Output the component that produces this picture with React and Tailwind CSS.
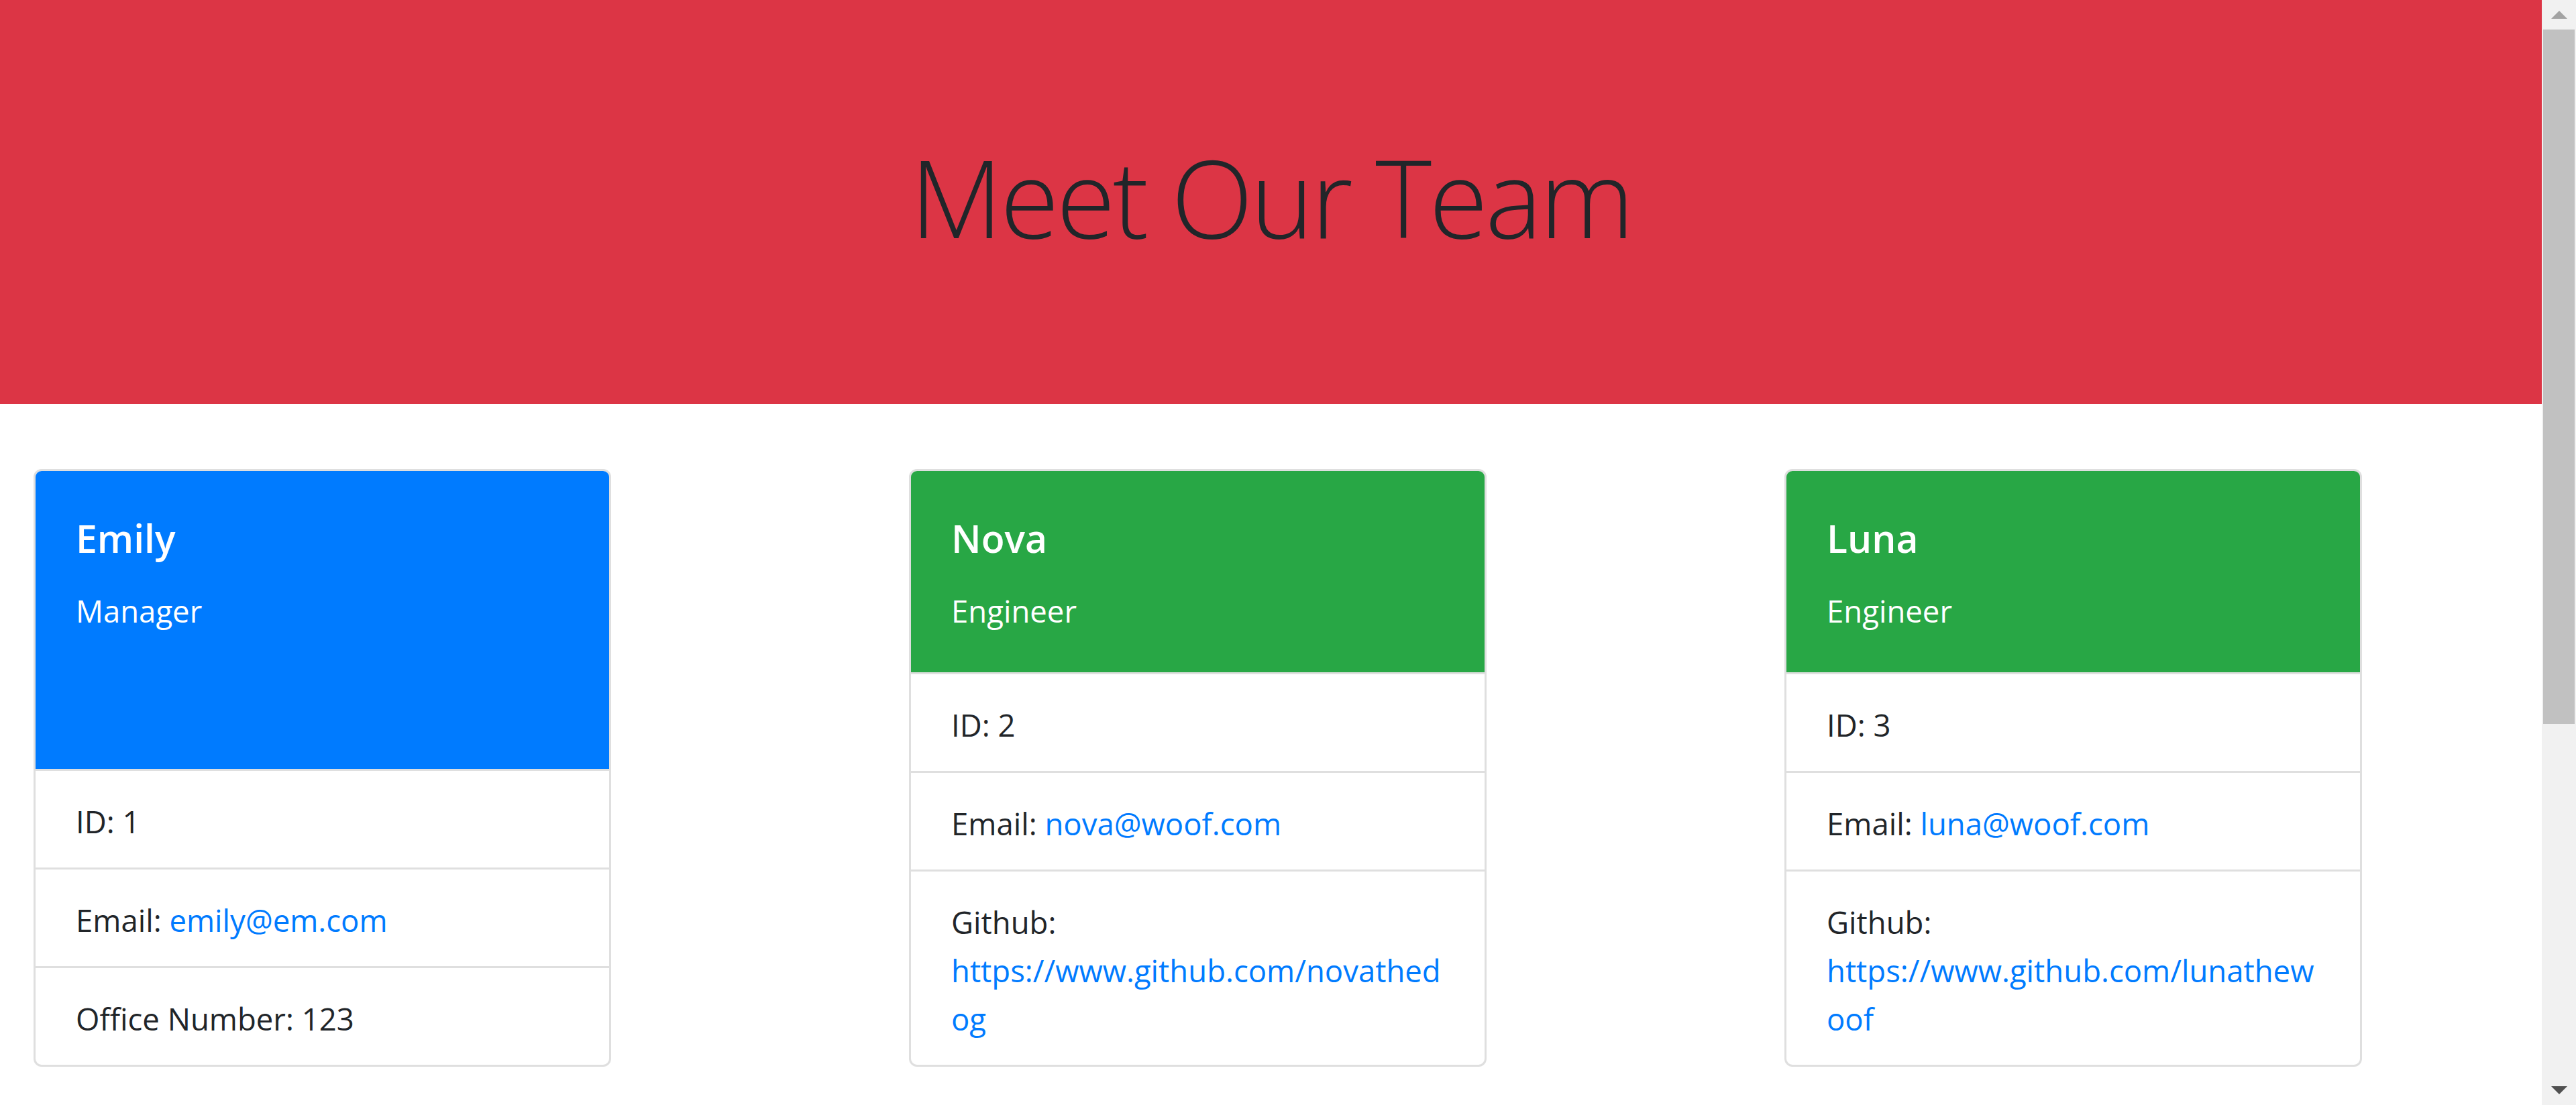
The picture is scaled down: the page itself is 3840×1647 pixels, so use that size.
import React from 'react';

const team = [
  {
    name: 'Emily',
    role: 'Manager',
    id: 1,
    email: 'emily@em.com',
    extra: { label: 'Office Number', value: '123' },
    color: 'bg-[#007bff]'
  },
  {
    name: 'Nova',
    role: 'Engineer',
    id: 2,
    email: 'nova@woof.com',
    github: 'https://www.github.com/novathedog',
    color: 'bg-[#28a745]'
  },
  {
    name: 'Luna',
    role: 'Engineer',
    id: 3,
    email: 'luna@woof.com',
    github: 'https://www.github.com/lunathewoof',
    color: 'bg-[#28a745]'
  }
];

// Tarjeta de cada miembro
const MemberCard = ({ member }) => {
  return (
    <div className="w-[861px] flex flex-col border-[3px] border-[#dfdfdf] rounded-[12px] bg-white">
      <div className={`flex-1 ${member.color} text-white px-[60px] pt-[64px] pb-[56px] rounded-t-[9px]`}>
        <h5 className="text-[57px] leading-[72px] font-semibold mb-[36px]">{member.name}</h5>
        <p className="text-[45.5px] leading-[72px]">{member.role}</p>
      </div>
      <ul className="text-[45.5px] leading-[72px] text-[#212529]">
        <li className="px-[60px] pt-[39px] pb-[33px] border-t-[3px] border-[#dfdfdf]">ID: {member.id}</li>
        <li className="px-[60px] pt-[39px] pb-[33px] border-t-[3px] border-[#dfdfdf]">
          Email: <a href={`mailto:${member.email}`} className="text-[#007bff]">{member.email}</a>
        </li>
        {member.extra ? (
          <li className="px-[60px] pt-[39px] pb-[33px] border-t-[3px] border-[#dfdfdf]">
            {member.extra.label}: {member.extra.value}
          </li>
        ) : (
          <li className="px-[60px] pt-[39px] pb-[33px] border-t-[3px] border-[#dfdfdf] [overflow-wrap:break-word]">
            Github: <a href={member.github} className="text-[#007bff]">{member.github}</a>
          </li>
        )}
      </ul>
    </div>
  );
};

// Barra de desplazamiento dibujada
const ScrollBar = () => (
  <div className="w-[51px] shrink-0 bg-[#f1f1f1] flex flex-col">
    <div className="h-[44px] flex items-center justify-center">
      <svg width="26" height="14" viewBox="0 0 26 14">
        <polygon points="13,1 25,13 1,13" fill="#a3a3a3" />
      </svg>
    </div>
    <div className="h-[1035px] mx-[2px] bg-[#c1c1c1]" />
    <div className="flex-1" />
    <div className="h-[44px] flex items-center justify-center">
      <svg width="26" height="14" viewBox="0 0 26 14">
        <polygon points="1,1 25,1 13,13" fill="#505050" />
      </svg>
    </div>
  </div>
);

const App = () => {
  return (
    <div className="flex h-screen overflow-hidden bg-white" style={{ fontFamily: '"Open Sans", "Noto Sans", sans-serif' }}>
      <div className="flex-1 min-w-0">
        <header className="h-[602px] bg-[#dc3545] pt-[197px]">
          <h1 className="text-center text-[160px] leading-[1.2] font-light tracking-[-4px] text-[#212529]">
            Meet Our Team
          </h1>
        </header>
        <main className="flex gap-[444px] px-[50px] pt-[97px]">
          {team.map((member) => (
            <MemberCard key={member.id} member={member} />
          ))}
        </main>
      </div>
      <ScrollBar />
    </div>
  );
};

export default App;
